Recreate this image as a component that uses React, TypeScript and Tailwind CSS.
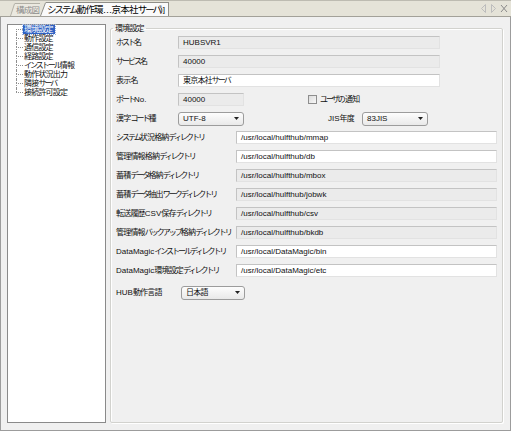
import React from "react";

const FONT = "font-['Liberation_Sans','Noto_Sans_CJK_JP',sans-serif]";

function T({ text }: { text: string }) {
  const parts = text.split(/([A-Za-z0-9.\-\/()\]]+|[\u30a0-\u30ff]+)/);
  return (
    <>
      {parts.map((p, i) => {
        if (p === "") return null;
        if (/^[A-Za-z0-9.\-\/()\]]+$/.test(p))
          return (
            <span key={i} className="tracking-normal text-[8px]">
              {p}
            </span>
          );
        if (/^[\u30a0-\u30ff]+$/.test(p))
          return (
            <span key={i} className="tracking-[-2px]">
              {p}
            </span>
          );
        return (
          <span key={i} className="tracking-[-0.8px]">
            {p}
          </span>
        );
      })}
    </>
  );
}

function Input({
  value,
  white = false,
  className = "",
}: {
  value: string;
  white?: boolean;
  className?: string;
}) {
  return (
    <div
      className={`h-[13px] shrink-0 flex items-center pl-[4px] border border-[#c3c3c3] border-r-[#e2e2e2] border-b-[#e2e2e2] text-[8px] tracking-normal whitespace-nowrap overflow-hidden text-[#111] ${
        white ? "bg-white" : "bg-[#ebebeb]"
      } ${className}`}
    >
      {value}
    </div>
  );
}

function Select({ value, className = "", cjk = false }: { value: string; className?: string; cjk?: boolean }) {
  return (
    <div
      className={`h-[14px] shrink-0 flex items-center justify-between pl-[4px] pr-[4px] rounded-[3px] border border-[#9c9c9c] bg-linear-to-b from-[#fdfdfd] to-[#e9e9e9] ${className}`}
    >
      <span className={cjk ? "" : "text-[8px] tracking-normal"}>{cjk ? <T text={value} /> : value}</span>
      <svg width="5" height="3" className="block">
        <path d="M0 0H5L2.5 3Z" fill="#222" />
      </svg>
    </div>
  );
}

const TREE = [
  "環境設定",
  "動作設定",
  "通信設定",
  "経路設定",
  "インストール情報",
  "動作状況出力",
  "隣接サーバ",
  "接続許可設定",
];

const DIRS: [string, string, boolean][] = [
  ["システム状況格納ディレクトリ", "/usr/local/hulfthub/mmap", true],
  ["管理情報格納ディレクトリ", "/usr/local/hulfthub/db", true],
  ["蓄積データ格納ディレクトリ", "/usr/local/hulfthub/mbox", false],
  ["蓄積データ抽出ワークディレクトリ", "/usr/local/hulfthub/jobwk", false],
  ["転送履歴CSV保存ディレクトリ", "/usr/local/hulfthub/csv", false],
  ["管理情報バックアップ格納ディレクトリ", "/usr/local/hulfthub/bkdb", false],
  ["DataMagicインストールディレクトリ", "/usr/local/DataMagic/bin", true],
  ["DataMagic環境設定ディレクトリ", "/usr/local/DataMagic/etc", true],
];

export default function App() {
  return (
    <div
      className={`w-[511px] h-[431px] flex flex-col overflow-hidden bg-[#f0f0f0] text-[8px] leading-[9px] tracking-[-1px] text-[#111] ${FONT}`}
    >
      {/* tab bar */}
      <div className="h-[17px] shrink-0 flex items-end bg-[#e5e3d8] border-t border-[#bdbbb1] border-b border-b-[#a3a199] pl-[10px] pr-[3px]">
        <svg width="5" height="13" className="block shrink-0">
          <path d="M0 13 L4.5 0.5 H5 V13Z" fill="#ebe9e0" />
          <path d="M0.5 13 L4.6 0.5" stroke="#b3b1a7" fill="none" />
        </svg>
        <div className="h-[13px] w-[25px] flex items-center pl-[1px] border-t border-[#b3b1a7] bg-[#ebe9e0] text-[#8c8c8c] text-[8.5px]">
          <T text="構成図" />
        </div>
        <svg width="6" height="14" className="block shrink-0">
          <path d="M0 14 L5.5 0.5 H6 V14Z" fill="#fafafa" />
          <path d="M0.5 14 L5.6 0.5" stroke="#8f8e88" fill="none" />
        </svg>
        <div className="h-[14px] flex items-center bg-[#fafafa] border-t border-r border-[#8f8e88] pl-[1px] pr-[3px] text-[9.5px] text-black whitespace-nowrap">
          <T text="システム動作環…京本社サーバ)]" />
        </div>
        <div className="ml-auto self-center">
          <svg width="28" height="9" className="block">
            <path d="M5.5 0.5 L1.5 4.5 L5.5 8.5Z" stroke="#bdbdbd" fill="none" />
            <path d="M11.5 0.5 L15.5 4.5 L11.5 8.5Z" stroke="#bdbdbd" fill="none" />
            <path d="M21 1 L27 8 M27 1 L21 8" stroke="#8a8a8a" strokeWidth="1" />
          </svg>
        </div>
      </div>

      {/* body */}
      <div className="flex-1 min-h-0 flex gap-[4px] border-l border-r border-b border-[#9c9c9c] pl-[6px] pr-[7px] pt-[7px] pb-[7px]">
        {/* tree */}
        <div className="w-[99px] shrink-0 bg-white border border-[#8a8a8a] pl-[8px]">
          {TREE.map((t, i) => (
            <div key={t} className="flex h-[9px] items-stretch whitespace-nowrap">
              <div className="w-[7px] shrink-0 flex flex-col">
                <div className={`h-[4px] ${i > 0 ? "border-l border-dotted border-[#8f8f8f]" : ""}`} />
                <div
                  className={`flex-1 border-t border-dotted border-[#8f8f8f] ${
                    i < TREE.length - 1 ? "border-l" : ""
                  }`}
                />
              </div>
              <span
                className={
                  i === 0
                    ? "bg-[#2f62c4] text-white pl-[1px] pr-[2px] outline outline-1 outline-dotted outline-[#9ab0dc]"
                    : "pl-[1px]"
                }
              >
                <T text={t} />
              </span>
            </div>
          ))}
        </div>

        {/* group box */}
        <fieldset className="flex-1 min-w-0 border border-[#d2d2ce] rounded-[2px] shadow-[inset_1px_1px_0_#ffffff,1px_1px_0_#ffffff]">
          <legend className="ml-[2px] px-[2px]">
            <T text="環境設定" />
          </legend>
          <div className="pl-[5px] pr-[5px] flex flex-col">
            <div className="h-[19px] flex items-center">
              <div className="w-[62px] shrink-0">
                <T text="ホスト名" />
              </div>
              <Input value="HUBSVR1" className="w-[262px]" />
            </div>
            <div className="h-[19px] flex items-center">
              <div className="w-[62px] shrink-0">
                <T text="サービス名" />
              </div>
              <Input value="40000" className="w-[262px]" />
            </div>
            <div className="h-[19px] flex items-center">
              <div className="w-[62px] shrink-0">
                <T text="表示名" />
              </div>
              <div className="h-[13px] w-[262px] flex items-center pl-[4px] bg-white border border-[#c3c3c3] border-r-[#e2e2e2] border-b-[#e2e2e2]">
                <T text="東京本社サーバ" />
              </div>
            </div>
            <div className="h-[19px] flex items-center">
              <div className="w-[62px] shrink-0">
                <T text="ポートNo." />
              </div>
              <Input value="40000" className="w-[66px]" />
              <div className="ml-[64px] w-[9px] h-[9px] shrink-0 border border-[#8e8e8e] bg-linear-to-br from-[#dcdcdc] to-[#f8f8f8]" />
              <div className="ml-[3px]">
                <T text="ユーザの通知" />
              </div>
            </div>
            <div className="h-[19px] flex items-center">
              <div className="w-[62px] shrink-0">
                <T text="漢字コード種" />
              </div>
              <Select value="UTF-8" className="w-[66px]" />
              <div className="w-[118px] shrink-0 text-right pr-[8px]">
                <T text="JIS年度" />
              </div>
              <Select value="83JIS" className="w-[66px]" />
            </div>
            {DIRS.map(([label, value, white]) => (
              <div key={label} className="h-[19px] flex items-center">
                <div className="w-[120px] shrink-0 whitespace-nowrap">
                  <T text={label} />
                </div>
                <Input value={value} white={white} className="w-[261px]" />
              </div>
            ))}
            <div className="h-[19px] mt-[3px] flex items-center">
              <div className="w-[65px] shrink-0">
                <T text="HUB動作言語" />
              </div>
              <Select value="日本語" cjk className="w-[64px]" />
            </div>
          </div>
        </fieldset>
      </div>
    </div>
  );
}
